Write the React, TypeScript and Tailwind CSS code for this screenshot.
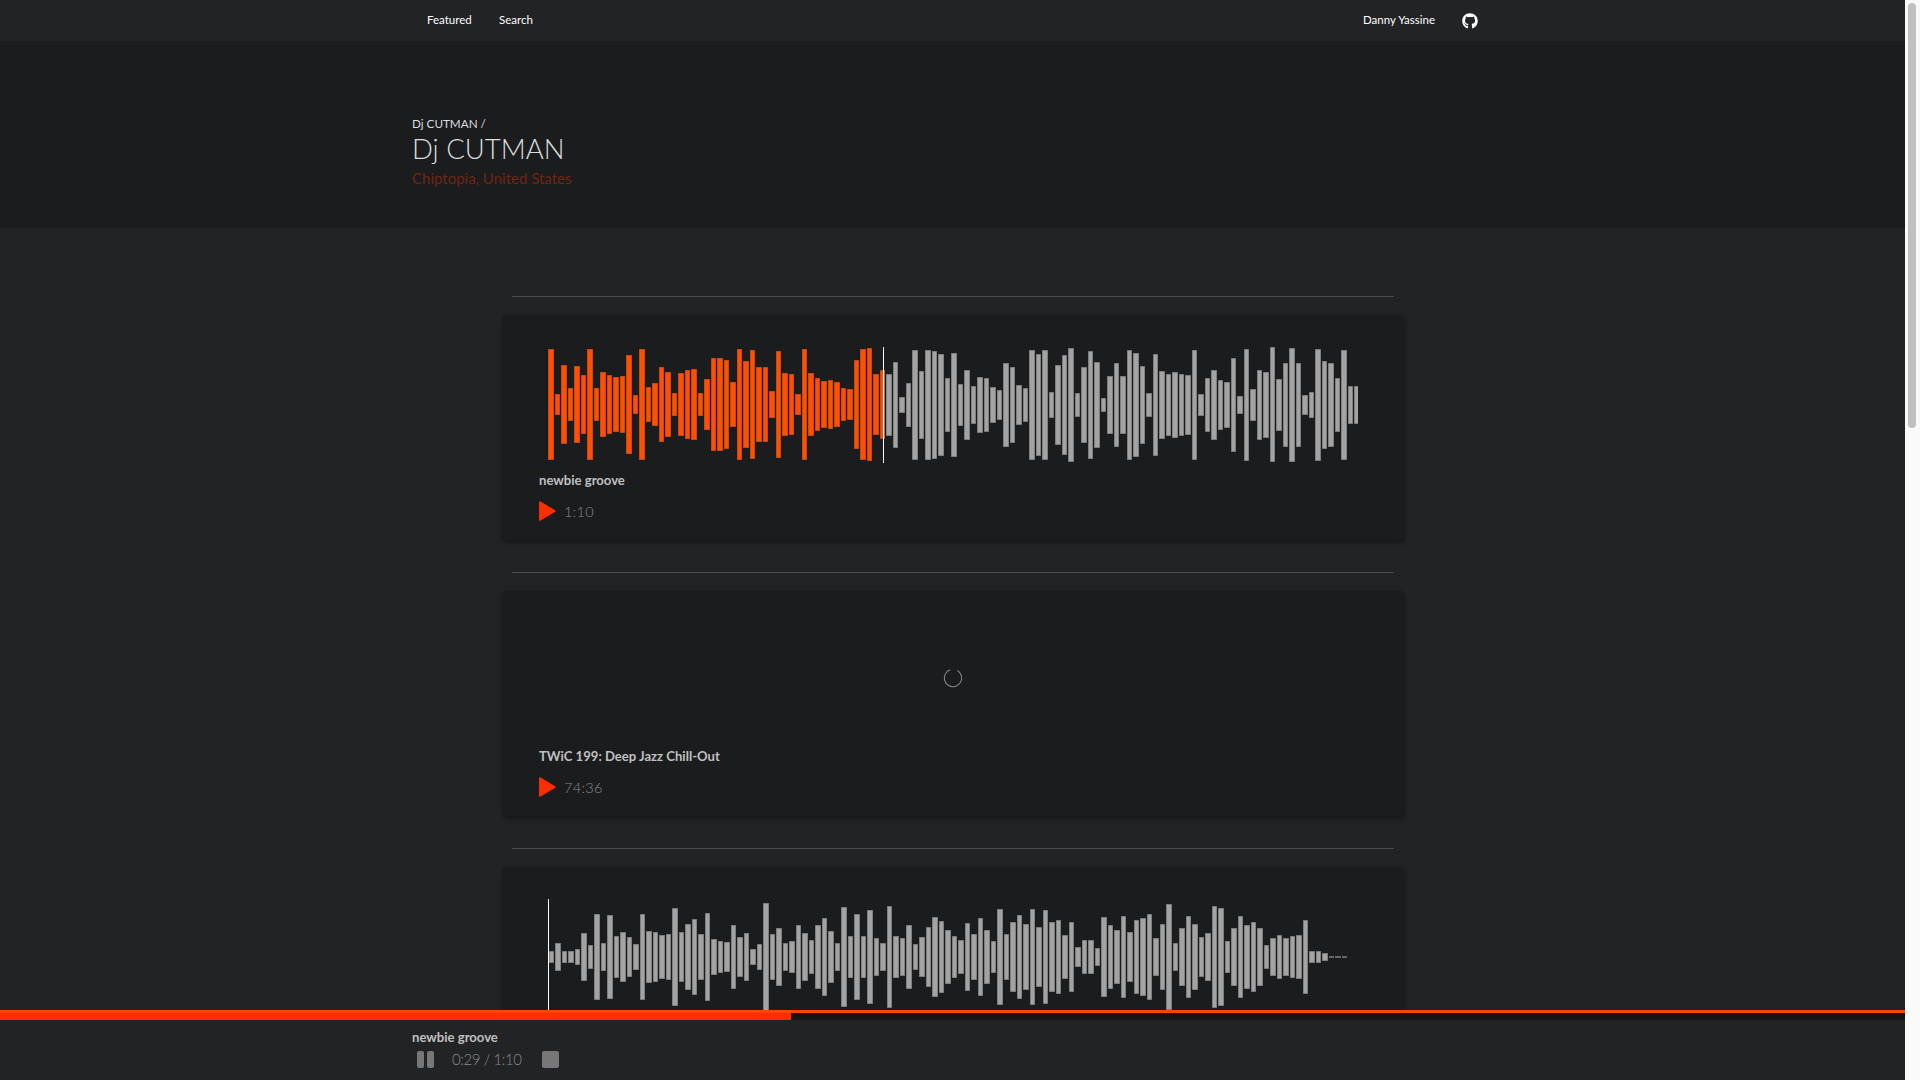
import { FaGithub } from 'react-icons/fa';

const FIRST_WAVE = [
  111, 21, 79, 33, 77, 59, 111, 33, 65, 59, 55, 57, 99, 19, 111, 35, 43, 75, 65, 23, 63, 69, 71, 23, 51, 93, 93, 89, 45,
  111, 87, 109, 75, 75, 27, 107, 63, 61, 21, 111, 63, 53, 47, 49, 45, 33, 31, 89, 111, 113, 61, 69, 62, 86, 16, 44, 110,
  68, 110, 108, 102, 54, 104, 42, 70, 38, 56, 54, 36, 30, 84, 76, 40, 34, 110, 102, 110, 26, 80, 100, 114, 24, 76, 108,
  86, 14, 58, 84, 58, 110, 104, 78, 24, 102, 68, 62, 66, 62, 60, 110, 22, 54, 70, 50, 46, 94, 18, 112, 32, 70, 66, 115,
  52, 84, 114, 84, 20, 26, 112, 88, 84, 54, 110, 38, 38,
];

const THIRD_WAVE = [
  12, 28, 12, 12, 16, 48, 24, 86, 28, 84, 42, 50, 40, 26, 86, 52, 50, 44, 46, 98, 50, 66, 76, 46, 88, 36, 32, 30, 64, 40,
  48, 16, 26, 108, 46, 58, 28, 32, 64, 48, 34, 64, 78, 52, 28, 100, 42, 86, 42, 94, 38, 28, 102, 42, 38, 64, 26, 40, 60,
  80, 72, 54, 42, 34, 68, 46, 78, 54, 32, 96, 46, 70, 84, 66, 96, 60, 94, 70, 74, 44, 70, 20, 34, 34, 18, 80, 64, 54, 82,
  50, 74, 78, 86, 38, 66, 106, 28, 58, 82, 66, 40, 48, 102, 98, 32, 58, 82, 64, 70, 58, 24, 38, 44, 38, 42, 44, 74, 12,
  12, 8, 2, 2, 2,
];

const STEP = 6.5;
const MID = 57.5;

function Bars({ bars, offset, fill, edge }: { bars: number[]; offset: number; fill: string; edge: string }) {
  return (
    <>
      {bars.map((h, i) => {
        // bars sit on whole pixels, so widths alternate 6/5 with a 1px gap
        const x = Math.floor(offset + i * STEP);
        const w = Math.floor(offset + (i + 1) * STEP) - x - 1;
        const y = Math.round(MID - h / 2);
        return (
          <g key={i}>
            <rect x={x} y={y} width={w} height={h} fill={edge} />
            {h > 2 && <rect x={x + 0.6} y={y + 0.6} width={w - 1.2} height={h - 1.2} fill={fill} />}
          </g>
        );
      })}
    </>
  );
}

function Waveform({ id, bars, offset, played }: { id: string; bars: number[]; offset: number; played: number }) {
  return (
    <svg className="block ml-[9px]" width={810} height={116} viewBox="0 0 810 116">
      <clipPath id={id}>
        <rect x={0} y={0} width={played} height={116} />
      </clipPath>
      <Bars bars={bars} offset={offset} fill="#a3a3a3" edge="#666666" />
      <g clipPath={`url(#${id})`}>
        <Bars bars={bars} offset={offset} fill="#ff4f00" edge="#a8441c" />
      </g>
      <rect x={played} y={0} width={1} height={116} fill="#ffffff" />
    </svg>
  );
}

function PlayIcon() {
  return (
    <svg className="w-[17px] h-[20px] flex-shrink-0" viewBox="0 0 17 20">
      <path d="M0.8 1 L15.8 10 L0.8 19 Z" fill="#ff2d00" stroke="#ff2d00" strokeWidth="1.5" strokeLinejoin="round" />
    </svg>
  );
}

function Spinner() {
  return (
    <svg className="w-[20px] h-[20px]" viewBox="0 0 20 20" fill="none">
      <circle cx="10" cy="10" r="8.7" stroke="#8a8a8a" strokeWidth="1" strokeDasharray="47 8" transform="rotate(-60 10 10)" />
    </svg>
  );
}

function TrackCard({ title, duration, children }: { title: string; duration: string; children: React.ReactNode }) {
  return (
    <div className="mb-[32px]">
      <div className="h-px bg-[#4a4b4d] ml-[9px] mr-[10px]" />
      <div className="mt-[18px] h-[225px] pt-[32px] pl-[36px] bg-[#1b1c1e] rounded-sm shadow-[0_2px_5px_rgba(0,0,0,0.45)]">
        {children}
        <p className="mt-[9px] text-[13.1px] leading-[16px] font-bold text-[#c0c0c0]">{title}</p>
        <div className="mt-[13px] flex items-start gap-2">
          <PlayIcon />
          <span className="pt-[1px] text-[14.5px] leading-[20px] font-light text-[#8a8a8a] tracking-[0.3px]">{duration}</span>
        </div>
      </div>
    </div>
  );
}

export default function App() {
  return (
    <div className="h-screen flex overflow-hidden bg-[#222325] font-['Lato','Open_Sans',sans-serif]">
      <div className="relative flex-1 overflow-hidden">
        {/* Nav */}
        <nav className="h-[41px] bg-[#222325]">
          <div className="w-[1081px] mx-auto h-full px-[15px] pb-[1px] flex items-center justify-between text-[11.5px] text-white">
            <div className="flex">
              <a className="w-[72px]">Featured</a>
              <a>Search</a>
            </div>
            <div className="flex items-center">
              <a className="w-[99px] whitespace-nowrap">Danny Yassine</a>
              <FaGithub className="w-[16px] h-[16px] mt-[2px]" />
            </div>
          </div>
        </nav>

        {/* Artist header */}
        <header className="h-[187px] bg-[#1b1c1e]">
          <div className="w-[1081px] mx-auto pt-[74px]">
            <p className="text-[11.7px] leading-[16px] text-[#dddddd]">Dj CUTMAN /</p>
            <h1 className="mt-[1px] text-[27.5px] leading-[34px] font-light text-[#dcdcdc]">Dj CUTMAN</h1>
            <p className="mt-[3px] text-[15px] leading-[18px] text-[#702510]">Chiptopia, United States</p>
          </div>
        </header>

        {/* Tracks */}
        <main className="ml-[503px] w-[901px] pt-[68px]">
          <TrackCard title="newbie groove" duration="1:10">
            <Waveform id="wave-1" bars={FIRST_WAVE} offset={0.5} played={335} />
          </TrackCard>
          <TrackCard title="TWiC 199: Deep Jazz Chill-Out" duration="74:36">
            <div className="h-[116px] pb-[6px] pr-[38px] flex items-center justify-center">
              <Spinner />
            </div>
          </TrackCard>
          <TrackCard title="Pixel Dreams" duration="3:42">
            <Waveform id="wave-3" bars={THIRD_WAVE} offset={1} played={0} />
          </TrackCard>
        </main>

        {/* Player */}
        <footer className="absolute left-0 right-0 bottom-0 h-[70px] bg-[#222325]">
          <div className="h-[3px] bg-[#ff4500]" />
          <div className="h-[7px] bg-[#141414]">
            <div className="h-full w-[791px] bg-[#ff2d00]" />
          </div>
          <div className="w-[1081px] mx-auto pt-[9px]">
            <p className="text-[13.1px] leading-[16px] font-bold text-[#c0c0c0]">newbie groove</p>
            <div className="mt-[4px] flex items-center text-[#8a8a8a]">
              <div className="ml-[5px] flex gap-[3px]">
                <span className="w-[7px] h-[17px] rounded-[2px] bg-[#777777]" />
                <span className="w-[7px] h-[17px] rounded-[2px] bg-[#777777]" />
              </div>
              <span className="ml-[18px] w-[90px] text-[15px] leading-[20px] font-light tracking-[-0.4px]">0:29 / 1:10</span>
              <span className="w-[17px] h-[17px] rounded-[2px] bg-[#777777]" />
            </div>
          </div>
        </footer>
      </div>

      {/* Scrollbar */}
      <div className="w-[15px] flex-shrink-0 bg-[#fafafa] pl-[3px] pt-[3px]">
        <div className="w-[8px] h-[425px] rounded-full bg-[#c1c1c1]" />
      </div>
    </div>
  );
}
